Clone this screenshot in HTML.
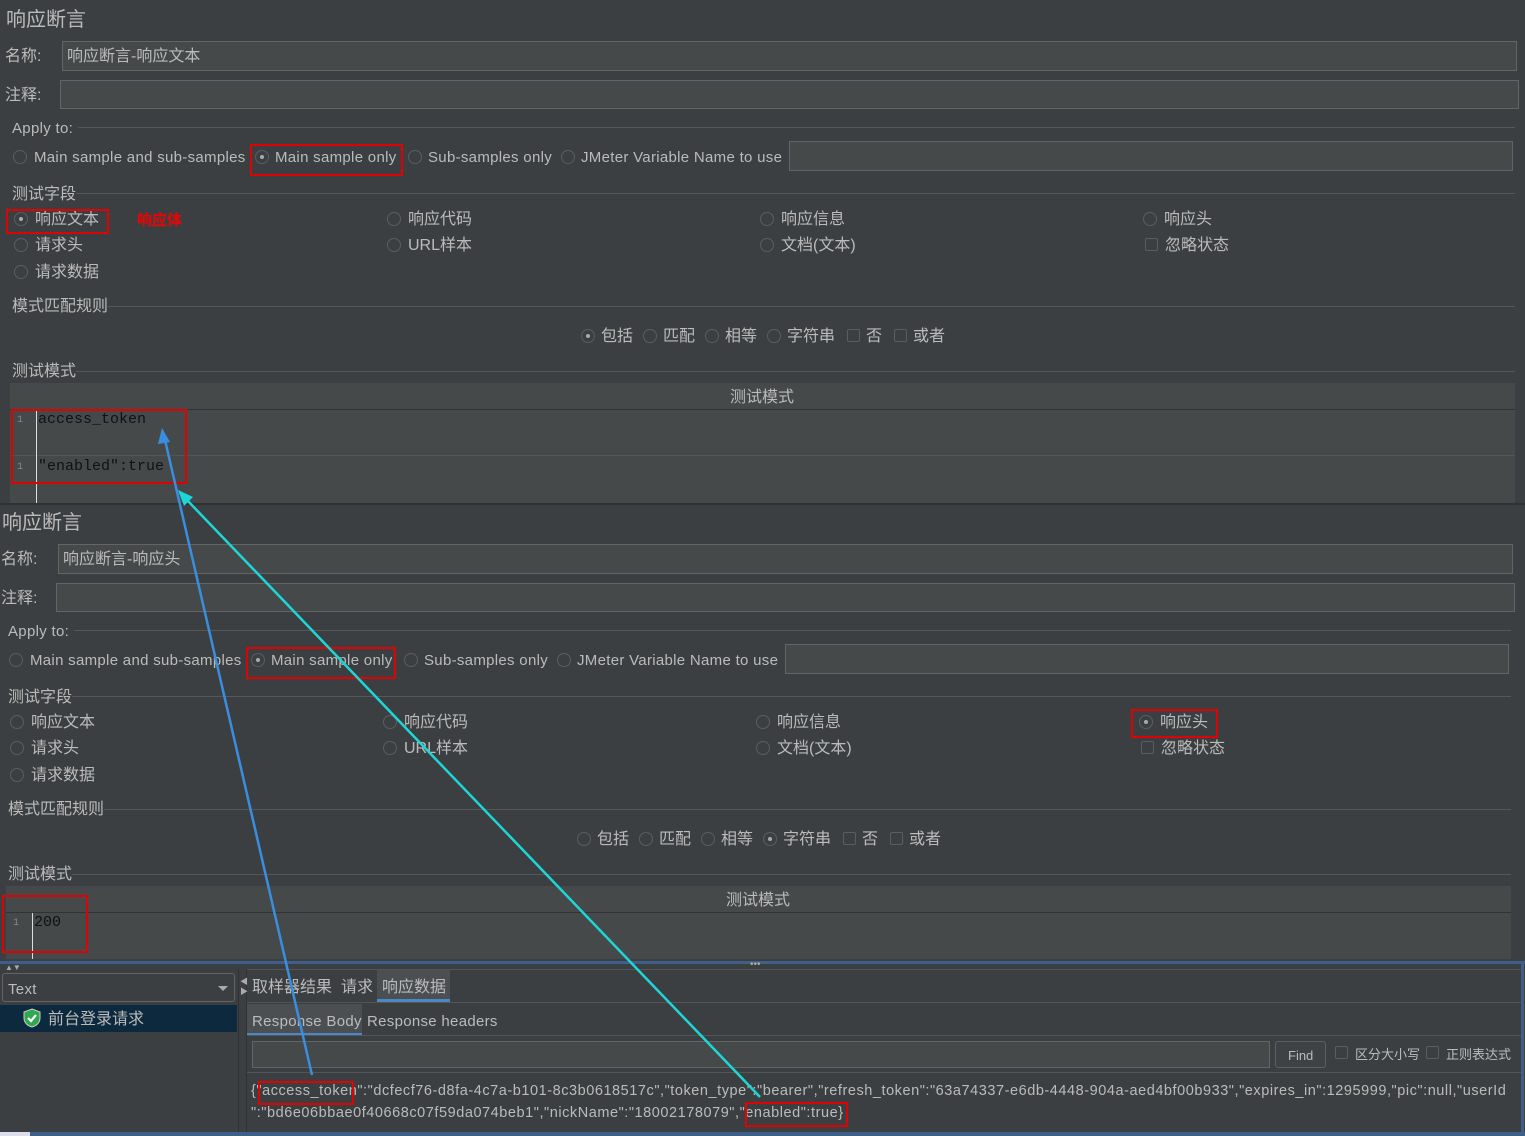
<!DOCTYPE html>
<html><head><meta charset="utf-8">
<style>
*{margin:0;padding:0;box-sizing:border-box}
body{width:1525px;height:1136px;overflow:hidden;background:#3c3f41;position:relative;font-family:"Liberation Sans","Noto Sans CJK SC",sans-serif;color:#bbbbbb;font-size:15px}
.a{position:absolute;white-space:nowrap}
.t{position:absolute;white-space:nowrap;line-height:18px;margin-top:1px}
.e{letter-spacing:0.3px}
.in{position:absolute;background:#45494a;border:1px solid #646464}
.r{position:absolute;width:14px;height:14px;border-radius:50%;border:1px solid #5b5e60;background:#3c3f41}
.r.s::after{content:"";position:absolute;left:4px;top:4px;width:4px;height:4px;border-radius:50%;background:#aaa}
.c{position:absolute;width:13px;height:13px;border:1px solid #5b5e60;border-radius:2px;background:#3c3f41}
.ln{position:absolute;height:1px;background:#555759}
.red{position:absolute;border:2px solid #e00000;z-index:5}
.mono{font-family:"Liberation Mono","DejaVu Sans Mono",monospace;color:#111;font-size:15px}
.num{position:absolute;font-size:10px;color:#888;font-family:"Liberation Mono",monospace}
</style></head><body>

<!-- Panel 1 -->
<div class="a" style="left:0;top:0;width:1525px;height:503px">
<div class="t" style="left:6px;top:7px;font-size:20px;line-height:24px">响应断言</div>
<div class="t" style="left:5px;top:47px;font-size:16px">名称:</div>
<div class="in" style="left:62px;top:41px;width:1455px;height:30px"></div>
<div class="t" style="left:67px;top:47px;font-size:16px">响应断言-响应文本</div>
<div class="t" style="left:5px;top:86px;font-size:16px">注释:</div>
<div class="in" style="left:60px;top:80px;width:1459px;height:29px"></div>
<div class="t e" style="left:12px;top:119px">Apply to:</div>
<div class="ln" style="left:78px;top:127px;width:1437px"></div>
<div class="r" style="left:13px;top:150px"></div><div class="t e" style="left:34px;top:148px">Main sample and sub-samples</div>
<div class="r s" style="left:255px;top:150px"></div><div class="t e" style="left:275px;top:148px">Main sample only</div>
<div class="red" style="left:250px;top:144px;width:153px;height:32px"></div>
<div class="r" style="left:408px;top:150px"></div><div class="t e" style="left:428px;top:148px">Sub-samples only</div>
<div class="r" style="left:561px;top:150px"></div><div class="t e" style="left:581px;top:148px">JMeter Variable Name to use</div>
<div class="in" style="left:789px;top:141px;width:724px;height:30px"></div>
<div class="t" style="left:12px;top:185px;font-size:16px">测试字段</div>
<div class="ln" style="left:76px;top:193px;width:1439px"></div>
<div class="r s" style="left:14px;top:212px"></div><div class="t" style="left:35px;top:210px;font-size:16px">响应文本</div>
<div class="red" style="left:6px;top:209px;width:103px;height:25px"></div>
<div class="t" style="left:137px;top:211px;font-size:15px;color:#f00000;font-weight:bold">响应体</div>
<div class="r" style="left:387px;top:212px"></div><div class="t" style="left:408px;top:210px;font-size:16px">响应代码</div>
<div class="r" style="left:760px;top:212px"></div><div class="t" style="left:781px;top:210px;font-size:16px">响应信息</div>
<div class="r" style="left:1143px;top:212px"></div><div class="t" style="left:1164px;top:210px;font-size:16px">响应头</div>
<div class="r" style="left:14px;top:238px"></div><div class="t" style="left:35px;top:236px;font-size:16px">请求头</div>
<div class="r" style="left:387px;top:238px"></div><div class="t" style="left:408px;top:236px;font-size:16px">URL样本</div>
<div class="r" style="left:760px;top:238px"></div><div class="t" style="left:781px;top:236px;font-size:16px">文档(文本)</div>
<div class="c" style="left:1145px;top:238px"></div><div class="t" style="left:1165px;top:236px;font-size:16px">忽略状态</div>
<div class="r" style="left:14px;top:265px"></div><div class="t" style="left:35px;top:263px;font-size:16px">请求数据</div>
<div class="t" style="left:12px;top:297px;font-size:16px">模式匹配规则</div>
<div class="ln" style="left:108px;top:306px;width:1407px"></div>
<div class="r s" style="left:581px;top:329px"></div><div class="t" style="left:601px;top:327px;font-size:16px">包括</div>
<div class="r" style="left:643px;top:329px"></div><div class="t" style="left:663px;top:327px;font-size:16px">匹配</div>
<div class="r" style="left:705px;top:329px"></div><div class="t" style="left:725px;top:327px;font-size:16px">相等</div>
<div class="r" style="left:767px;top:329px"></div><div class="t" style="left:787px;top:327px;font-size:16px">字符串</div>
<div class="c" style="left:847px;top:329px"></div><div class="t" style="left:866px;top:327px;font-size:16px">否</div>
<div class="c" style="left:894px;top:329px"></div><div class="t" style="left:913px;top:327px;font-size:16px">或者</div>
<div class="t" style="left:12px;top:362px;font-size:16px">测试模式</div>
<div class="ln" style="left:76px;top:371px;width:1439px"></div>
<div class="a" style="left:10px;top:383px;width:1505px;height:27px;background:#45494a;border-bottom:1px solid #333"></div>
<div class="t" style="left:730px;top:388px;font-size:16px">测试模式</div>
<div class="a" style="left:10px;top:410px;width:1505px;height:93px;background:#45494a"></div>
<div class="a" style="left:10px;top:455px;width:1505px;height:1px;background:#52565a"></div>
<div class="a" style="left:36px;top:410px;width:1px;height:93px;background:#ddd"></div>
<div class="num" style="left:17px;top:415px">1</div>
<div class="t mono" style="left:38px;top:410px">access_token</div>
<div class="num" style="left:17px;top:462px">1</div>
<div class="t mono" style="left:38px;top:457px">"enabled":true</div>
<div class="red" style="left:11px;top:409px;width:176px;height:75px"></div>
</div>
<div class="a" style="left:0;top:503px;width:1525px;height:2px;background:#2f3133"></div>

<!-- Panel 2 -->
<div class="a" style="left:-4px;top:503px;width:1525px;height:460px">
<div class="t" style="left:6px;top:7px;font-size:20px;line-height:24px">响应断言</div>
<div class="t" style="left:5px;top:47px;font-size:16px">名称:</div>
<div class="in" style="left:62px;top:41px;width:1455px;height:30px"></div>
<div class="t" style="left:67px;top:47px;font-size:16px">响应断言-响应头</div>
<div class="t" style="left:5px;top:86px;font-size:16px">注释:</div>
<div class="in" style="left:60px;top:80px;width:1459px;height:29px"></div>
<div class="t e" style="left:12px;top:119px">Apply to:</div>
<div class="ln" style="left:78px;top:127px;width:1437px"></div>
<div class="r" style="left:13px;top:150px"></div><div class="t e" style="left:34px;top:148px">Main sample and sub-samples</div>
<div class="r s" style="left:255px;top:150px"></div><div class="t e" style="left:275px;top:148px">Main sample only</div>
<div class="red" style="left:250px;top:144px;width:150px;height:32px"></div>
<div class="r" style="left:408px;top:150px"></div><div class="t e" style="left:428px;top:148px">Sub-samples only</div>
<div class="r" style="left:561px;top:150px"></div><div class="t e" style="left:581px;top:148px">JMeter Variable Name to use</div>
<div class="in" style="left:789px;top:141px;width:724px;height:30px"></div>
<div class="t" style="left:12px;top:185px;font-size:16px">测试字段</div>
<div class="ln" style="left:76px;top:193px;width:1439px"></div>
<div class="r" style="left:14px;top:212px"></div><div class="t" style="left:35px;top:210px;font-size:16px">响应文本</div>
<div class="r" style="left:387px;top:212px"></div><div class="t" style="left:408px;top:210px;font-size:16px">响应代码</div>
<div class="r" style="left:760px;top:212px"></div><div class="t" style="left:781px;top:210px;font-size:16px">响应信息</div>
<div class="r s" style="left:1143px;top:212px"></div><div class="t" style="left:1164px;top:210px;font-size:16px">响应头</div>
<div class="red" style="left:1135px;top:206px;width:87px;height:29px"></div>
<div class="r" style="left:14px;top:238px"></div><div class="t" style="left:35px;top:236px;font-size:16px">请求头</div>
<div class="r" style="left:387px;top:238px"></div><div class="t" style="left:408px;top:236px;font-size:16px">URL样本</div>
<div class="r" style="left:760px;top:238px"></div><div class="t" style="left:781px;top:236px;font-size:16px">文档(文本)</div>
<div class="c" style="left:1145px;top:238px"></div><div class="t" style="left:1165px;top:236px;font-size:16px">忽略状态</div>
<div class="r" style="left:14px;top:265px"></div><div class="t" style="left:35px;top:263px;font-size:16px">请求数据</div>
<div class="t" style="left:12px;top:297px;font-size:16px">模式匹配规则</div>
<div class="ln" style="left:108px;top:306px;width:1407px"></div>
<div class="r" style="left:581px;top:329px"></div><div class="t" style="left:601px;top:327px;font-size:16px">包括</div>
<div class="r" style="left:643px;top:329px"></div><div class="t" style="left:663px;top:327px;font-size:16px">匹配</div>
<div class="r" style="left:705px;top:329px"></div><div class="t" style="left:725px;top:327px;font-size:16px">相等</div>
<div class="r s" style="left:767px;top:329px"></div><div class="t" style="left:787px;top:327px;font-size:16px">字符串</div>
<div class="c" style="left:847px;top:329px"></div><div class="t" style="left:866px;top:327px;font-size:16px">否</div>
<div class="c" style="left:894px;top:329px"></div><div class="t" style="left:913px;top:327px;font-size:16px">或者</div>
<div class="t" style="left:12px;top:362px;font-size:16px">测试模式</div>
<div class="ln" style="left:76px;top:371px;width:1439px"></div>
<div class="a" style="left:10px;top:383px;width:1505px;height:27px;background:#45494a;border-bottom:1px solid #333"></div>
<div class="t" style="left:730px;top:388px;font-size:16px">测试模式</div>
<div class="a" style="left:10px;top:410px;width:1505px;height:46px;background:#45494a"></div>
<div class="a" style="left:36px;top:410px;width:1px;height:46px;background:#ddd"></div>
<div class="num" style="left:17px;top:415px">1</div>
<div class="t mono" style="left:38px;top:410px">200</div>
<div class="red" style="left:6px;top:392px;width:86px;height:58px"></div>
</div>

<!-- Bottom pane -->
<div class="a" style="left:0;top:961px;width:1525px;height:3px;background:#3e5f88"></div>
<div class="t" style="left:5px;top:958px;font-size:8px;color:#aaa">▲▼</div>
<div class="t" style="left:750px;top:955px;font-size:10px;color:#aaa">•••</div>
<div class="a" style="left:1521px;top:961px;width:3px;height:175px;background:#3e5f88"></div>
<div class="a" style="left:0;top:1132px;width:1525px;height:4px;background:#3e5f88"></div>
<div class="a" style="left:0;top:1132px;width:30px;height:4px;background:#dde"></div>
<div class="a" style="left:238px;top:969px;width:1px;height:163px;background:#2f3133"></div>
<div class="a" style="left:246px;top:969px;width:1px;height:163px;background:#2f3133"></div>
<div class="t" style="left:240px;top:976px;font-size:8px;color:#aaa;line-height:10px">◀<br>▶</div>
<div class="a" style="left:2px;top:973px;width:233px;height:29px;border:1px solid #646464;border-radius:3px;background:#3c3f41"></div>
<div class="t e" style="left:8px;top:980px;font-size:15px">Text</div>
<div class="a" style="left:218px;top:986px;width:0;height:0;border-left:5px solid transparent;border-right:5px solid transparent;border-top:5px solid #aaa"></div>
<div class="a" style="left:0;top:1005px;width:237px;height:27px;background:#0d293e"></div>
<svg class="a" style="left:23px;top:1008px" width="18" height="20" viewBox="0 0 18 20"><path d="M9 1 L17 4 V10 C17 15 13 18 9 19 C5 18 1 15 1 10 V4 Z" fill="#2fa84f" stroke="#ccc" stroke-width="1"/><path d="M5 10 L8 13 L13 7" stroke="#fff" stroke-width="2.2" fill="none"/></svg>
<div class="t" style="left:48px;top:1010px;font-size:16px">前台登录请求</div>
<div class="a" style="left:247px;top:969px;width:1274px;height:1px;background:#555"></div>
<div class="t" style="left:252px;top:978px;font-size:16px">取样器结果</div>
<div class="t" style="left:341px;top:978px;font-size:16px">请求</div>
<div class="a" style="left:377px;top:970px;width:73px;height:32px;background:#4b4f52;border-bottom:3px solid #4a88c7"></div>
<div class="t" style="left:382px;top:978px;font-size:16px">响应数据</div>
<div class="a" style="left:247px;top:1002px;width:1274px;height:1px;background:#555"></div>
<div class="a" style="left:247px;top:1004px;width:115px;height:32px;background:#4b4f52;border-bottom:3px solid #4a88c7"></div>
<div class="t e" style="left:252px;top:1012px;font-size:15px">Response Body</div>
<div class="t e" style="left:367px;top:1012px;font-size:15px">Response headers</div>
<div class="a" style="left:247px;top:1035px;width:1274px;height:1px;background:#555"></div>
<div class="in" style="left:252px;top:1041px;width:1018px;height:27px"></div>
<div class="a" style="left:1275px;top:1041px;width:51px;height:27px;border:1px solid #5e6060;border-radius:3px;background:#3f4244"></div>
<div class="t" style="left:1288px;top:1046px;font-size:13px">Find</div>
<div class="c" style="left:1335px;top:1046px"></div><div class="t" style="left:1355px;top:1045px;font-size:13px">区分大小写</div>
<div class="c" style="left:1426px;top:1046px"></div><div class="t" style="left:1446px;top:1045px;font-size:13px">正则表达式</div>
<div class="a" style="left:247px;top:1072px;width:1274px;height:1px;background:#555"></div>
<div class="t" style="left:251px;top:1081px;font-size:14.5px;letter-spacing:0.55px">{"access_token":"dcfecf76-d8fa-4c7a-b101-8c3b0618517c","token_type":"bearer","refresh_token":"63a74337-e6db-4448-904a-aed4bf00b933","expires_in":1295999,"pic":null,"userId</div>
<div class="t" style="left:251px;top:1103px;font-size:14.5px;letter-spacing:0.55px">":"bd6e06bbae0f40668c07f59da074beb1","nickName":"18002178079","enabled":true}</div>
<div class="red" style="left:258px;top:1081px;width:96px;height:24px"></div>
<div class="red" style="left:745px;top:1102px;width:103px;height:25px"></div>

<!-- Arrows -->
<svg class="a" style="left:0;top:0;z-index:6" width="1525" height="1136">
<line x1="312" y1="1075" x2="165" y2="440" stroke="#3a8ee0" stroke-width="2.5"/>
<polygon points="162,428 158,444 170,442" fill="#3a8ee0"/>
<line x1="760" y1="1097" x2="186" y2="499" stroke="#1ed6d6" stroke-width="2.5"/>
<polygon points="178,490 184,506 193,497" fill="#1ed6d6"/>
</svg>
</body></html>
